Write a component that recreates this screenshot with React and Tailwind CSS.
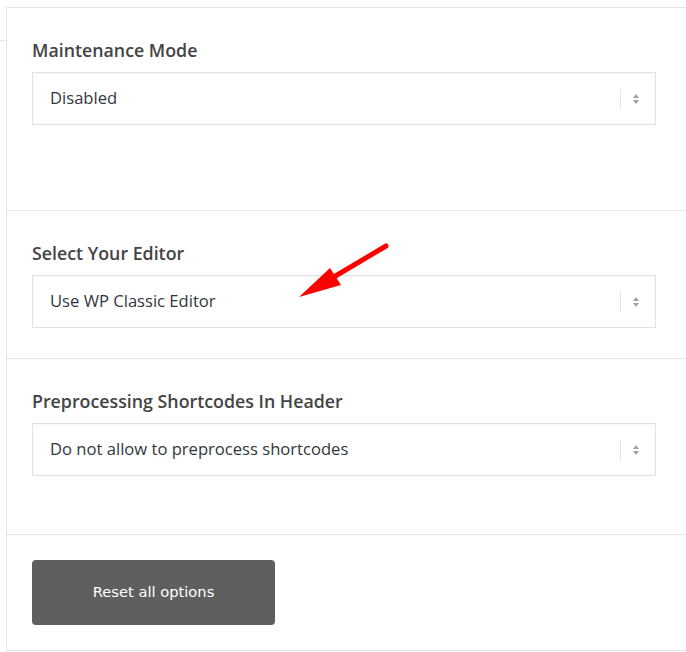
function SelectBox({ value }) {
  return (
    <div className="flex h-[53px] items-center border border-[#e2e2e2] bg-white pl-[17px] pr-[15px] shadow-[inset_0_1px_2px_rgba(0,0,0,0.04)]">
      <span className="flex-1 text-[16.6px] text-[#32373c]">{value}</span>
      <span className="h-[20px] w-px bg-[#e4e4e4]" />
      <svg width="8" height="12" viewBox="0 0 8 12" className="ml-[11px]">
        <path d="M4 1 L7 5 L1 5 Z" fill="#a0a0a0" />
        <path d="M4 11 L7 7 L1 7 Z" fill="#a0a0a0" />
      </svg>
    </div>
  );
}

function Field({ title, value, className }) {
  return (
    <div className={"border-t border-[#e5e5e5] " + className}>
      <h3 className="mb-[10px] text-[17.8px] leading-[24px] font-semibold text-[#444]">{title}</h3>
      <SelectBox value={value} />
    </div>
  );
}

export default function App() {
  return (
    <div className="flex h-[652px] w-[686px] bg-white font-['Open_Sans',sans-serif]">
      <div className="h-[41px] w-[6px] shrink-0 border-b border-[#e5e5e5]" />
      <div className="relative mt-[7px] flex-1 border-l border-[#e5e5e5]">
        <Field
          title="Maintenance Mode"
          value="Disabled"
          className="pl-[25px] pr-[30px] pt-[30px] pb-[85px]"
        />
        <Field
          title="Select Your Editor"
          value="Use WP Classic Editor"
          className="pl-[25px] pr-[30px] pt-[30px] pb-[30px]"
        />
        <Field
          title="Preprocessing Shortcodes In Header"
          value="Do not allow to preprocess shortcodes"
          className="pl-[25px] pr-[30px] pt-[30px] pb-[58px]"
        />
        <div className="border-t border-b border-[#e5e5e5] pl-[25px] pt-[25px] pb-[25px]">
          <button className="h-[65px] w-[243px] rounded-[4px] bg-[#5f5f5f] font-['DejaVu_Sans',sans-serif] text-[14.7px] text-white">
            Reset all options
          </button>
        </div>

        {/* red annotation arrow */}
        <svg
          className="pointer-events-none absolute left-[280px] top-[230px]"
          width="110"
          height="75"
          viewBox="0 0 110 75"
        >
          <line x1="99" y1="9" x2="40" y2="44" stroke="#ff0000" strokeWidth="5" strokeLinecap="round" />
          <path d="M12 60 L43 31 L54 48 Z" fill="#ff0000" />
        </svg>
      </div>
    </div>
  );
}
